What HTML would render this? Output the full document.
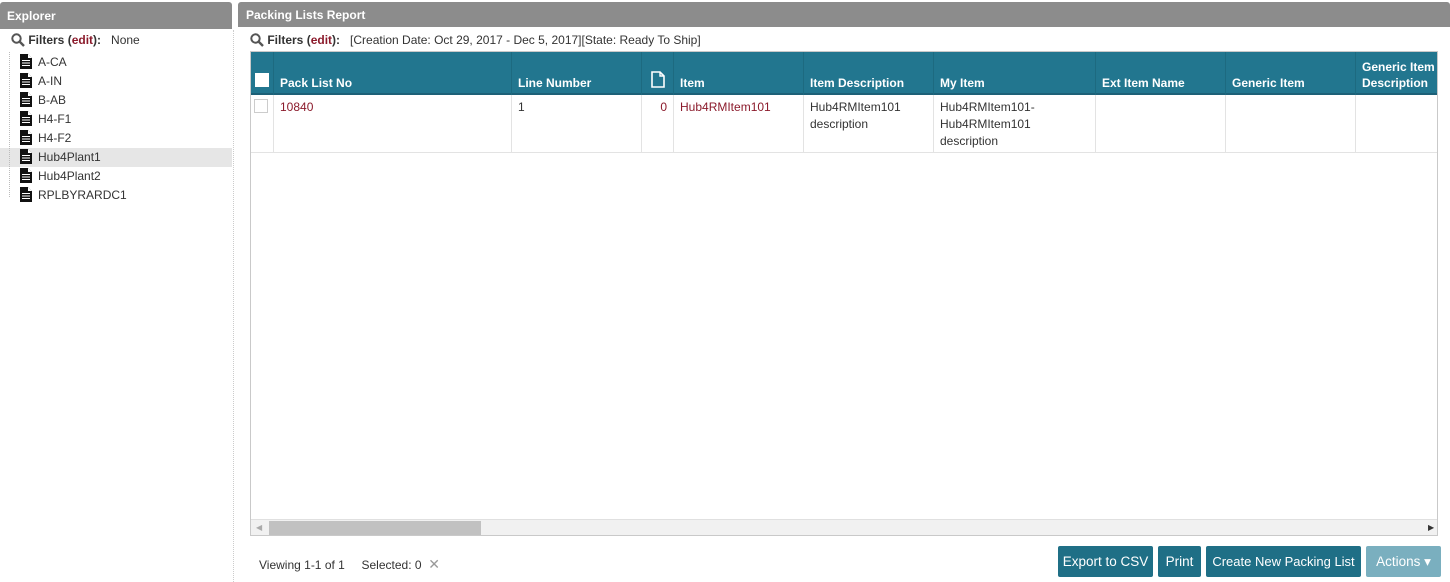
<!DOCTYPE html>
<html><head><style>
*{box-sizing:border-box;margin:0;padding:0}
body{width:1450px;height:582px;background:#fff;font-family:"Liberation Sans",sans-serif;font-size:12px;color:#333;position:relative;overflow:hidden}
.abs{position:absolute}
.hdr{background:#8c8c8c;color:#fff;font-weight:bold;font-size:12px;border-radius:3px 3px 0 0}
.tree div{position:absolute;left:20px;height:18px;line-height:18px;font-size:12px;color:#333}
.tree svg{vertical-align:-3px;margin-right:6px}
.th{position:absolute;top:0;height:43px;border-right:1px solid #1d6a80;color:#fff;font-weight:bold;padding:0 6px;display:flex;align-items:flex-end;padding-bottom:4px;line-height:16px}
.td{position:absolute;top:43px;height:58px;border-right:1px solid #e3e3e3;border-bottom:1px solid #e3e3e3;padding:4px 6px;line-height:17px}
.red{color:#8b1a2b}
.btn{position:absolute;top:546px;height:31px;background:#1f6f86;color:#fff;font-size:13.5px;line-height:31px;text-align:center;border-radius:2px}
.mag{vertical-align:-3px}
</style></head><body>
<svg width="0" height="0" style="position:absolute"><defs>
<symbol id="d" viewBox="0 0 12 15"><path d="M0 0H8L12 4V15H0Z" fill="#111"/><path d="M8 0V4H12" fill="#fff"/><path d="M2 6.5H10M2 9H10M2 11.5H10" stroke="#fff" stroke-width="1"/></symbol>
<symbol id="m" viewBox="0 0 14 14"><circle cx="5.5" cy="5.5" r="4.2" fill="none" stroke="#555" stroke-width="2"/><path d="M8.5 8.5L13 13" stroke="#555" stroke-width="2.4"/></symbol>
</defs></svg>
<div class="abs hdr" style="left:0;top:2px;width:232px;height:27px;line-height:29px;padding-left:7px">Explorer</div>
<div class="abs" style="left:233px;top:30px;height:552px;border-left:1px dotted #ccc"></div>
<div class="abs" style="left:11px;top:33px;font-size:12px"><svg class="mag" width="14" height="14"><use href="#m"/></svg> <b>Filters (<span class="red">edit</span>):</b>&nbsp;&nbsp; None</div>
<div class="abs" style="left:0;top:148px;width:232px;height:19px;background:#e6e6e6"></div>
<div class="abs" style="left:9px;top:52px;height:145px;border-left:1px dotted #bbb"></div>
<div class="tree">
<div style="top:53px"><svg width="12" height="15"><use href="#d"/></svg>A-CA</div>
<div style="top:72px"><svg width="12" height="15"><use href="#d"/></svg>A-IN</div>
<div style="top:91px"><svg width="12" height="15"><use href="#d"/></svg>B-AB</div>
<div style="top:110px"><svg width="12" height="15"><use href="#d"/></svg>H4-F1</div>
<div style="top:129px"><svg width="12" height="15"><use href="#d"/></svg>H4-F2</div>
<div style="top:148px"><svg width="12" height="15"><use href="#d"/></svg>Hub4Plant1</div>
<div style="top:167px"><svg width="12" height="15"><use href="#d"/></svg>Hub4Plant2</div>
<div style="top:186px"><svg width="12" height="15"><use href="#d"/></svg>RPLBYRARDC1</div>
</div>
<div class="abs hdr" style="left:238px;top:2px;width:1212px;height:25px;line-height:26px;padding-left:8px">Packing Lists Report</div>
<div class="abs" style="left:250px;top:33px"><svg class="mag" width="14" height="14"><use href="#m"/></svg> <b>Filters (<span class="red">edit</span>):</b>&nbsp;&nbsp; [Creation Date: Oct 29, 2017 - Dec 5, 2017][State: Ready To Ship]</div>
<div class="abs" style="left:250px;top:51px;width:1188px;height:485px;border:1px solid #c9c9c9;overflow:hidden">
<div class="abs" style="left:0;top:0;width:1188px;height:43px;background:#22768f;border-bottom:2px solid #1d6077"></div>
<div class="th" style="left:0;width:23px;padding:0 0 0 4px"><span style="display:inline-block;width:14px;height:14px;background:#fff;margin-bottom:8px"></span></div>
<div class="th" style="left:23px;width:238px">Pack List No</div>
<div class="th" style="left:261px;width:130px">Line Number</div>
<div class="th" style="left:391px;width:32px;justify-content:center"><svg width="14" height="17" viewBox="0 0 14 17" style="margin-bottom:3px"><path d="M1 1H9L13 5V16H1Z" fill="none" stroke="#fff" stroke-width="1.6"/><path d="M9 1V5H13" fill="none" stroke="#fff" stroke-width="1.4"/></svg></div>
<div class="th" style="left:423px;width:130px">Item</div>
<div class="th" style="left:553px;width:130px">Item Description</div>
<div class="th" style="left:683px;width:162px">My Item</div>
<div class="th" style="left:845px;width:130px">Ext Item Name</div>
<div class="th" style="left:975px;width:130px">Generic Item</div>
<div class="th" style="left:1105px;width:90px;border:none">Generic Item Description</div>
<div class="td" style="left:0;width:23px;padding:4px 3px"><span style="display:inline-block;width:14px;height:14px;border:1px solid #ccc"></span></div>
<div class="td red" style="left:23px;width:238px">10840</div>
<div class="td" style="left:261px;width:130px">1</div>
<div class="td red" style="left:391px;width:32px;text-align:right">0</div>
<div class="td red" style="left:423px;width:130px">Hub4RMItem101</div>
<div class="td" style="left:553px;width:130px">Hub4RMItem101 description</div>
<div class="td" style="left:683px;width:162px">Hub4RMItem101-Hub4RMItem101 description</div>
<div class="td" style="left:845px;width:130px"></div>
<div class="td" style="left:975px;width:130px"></div>
<div class="td" style="left:1105px;width:90px;border-right:none"></div>
<div class="abs" style="left:0;top:467px;width:1188px;height:17px;background:#f1f1f1;border-top:1px solid #e0e0e0"></div>
<div class="abs" style="left:18px;top:469px;width:212px;height:14px;background:#c1c1c1"></div>
<div class="abs" style="left:5px;top:471px;font-size:8px;color:#aaa">◀</div>
<div class="abs" style="left:1177px;top:471px;font-size:8px;color:#333">▶</div>
</div>
<div class="abs" style="left:259px;top:556px;color:#333">Viewing 1-1 of 1 &nbsp;&nbsp;&nbsp; Selected: 0 &nbsp;<span style="color:#999;font-size:14px">✕</span></div>
<div class="btn" style="left:1058px;width:95px">Export to CSV</div>
<div class="btn" style="left:1158px;width:43px">Print</div>
<div class="btn" style="left:1206px;width:155px;font-size:13px">Create New Packing List</div>
<div class="btn" style="left:1366px;width:75px;background:#7aafbf">Actions ▾</div>
</body></html>
